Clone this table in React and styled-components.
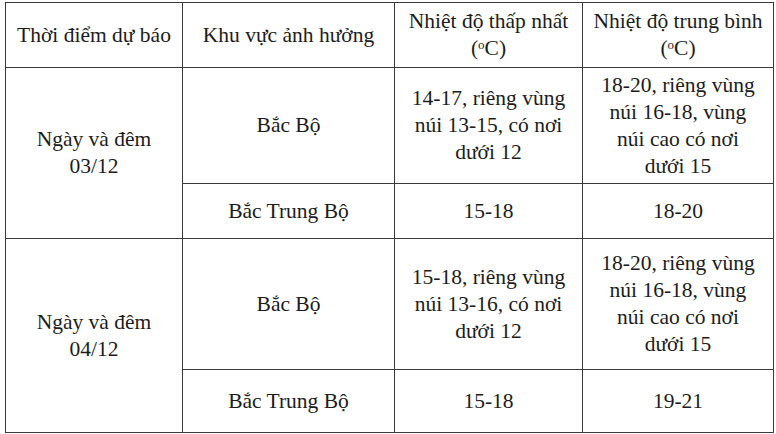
import React from 'react';
import styled, { createGlobalStyle } from 'styled-components';

const GlobalStyle = createGlobalStyle`
    html, body {
        margin: 0;
        padding: 0;
        background: #ffffff;
    }
`;

const Page = styled.div`
    width: 776px;
    height: 434px;
    padding: 2px 0 0 5px;
    box-sizing: border-box;
    overflow: hidden;
    background: #ffffff;
`;

const Table = styled.table`
    border-collapse: collapse;
    table-layout: fixed;
    width: 768px;
    font-family: "Liberation Serif", "Times New Roman", serif;
    font-size: 21.5px;
    line-height: 27px;
    color: #1c1c1c;
`;

const Row = styled.tr`
    height: ${(p) => p.$h}px;
`;

const Cell = styled.td`
    border: 1.5px solid #3a3a3a;
    text-align: center;
    vertical-align: middle;
    padding: 0 8px;
    font-family: "Liberation Serif", "Times New Roman", serif;
    font-size: 21.5px;
    line-height: 27px;
    font-weight: normal;
    color: #1c1c1c;
`;

const Sup = styled.sup`
    font-size: 13px;
    line-height: 0;
    vertical-align: 6px;
`;

const Degree = () => (
    <>
        (<Sup>o</Sup>C)
    </>
);

const days = [
    {
        label: 'Ngày và đêm',
        date: '03/12',
        bacBoH: 116,
        trungH: 55,
        bacBoMin: ['14-17, riêng vùng', 'núi 13-15, có nơi', 'dưới 12'],
        bacBoAvg: ['18-20, riêng vùng', 'núi 16-18, vùng', 'núi cao có nơi', 'dưới 15'],
        trungMin: '15-18',
        trungAvg: '18-20',
    },
    {
        label: 'Ngày và đêm',
        date: '04/12',
        bacBoH: 131,
        trungH: 63,
        bacBoMin: ['15-18, riêng vùng', 'núi 13-16, có nơi', 'dưới 12'],
        bacBoAvg: ['18-20, riêng vùng', 'núi 16-18, vùng', 'núi cao có nơi', 'dưới 15'],
        trungMin: '15-18',
        trungAvg: '19-21',
    },
];

const Lines = ({ items }) =>
    items.map((line, i) => (
        <React.Fragment key={i}>
            {line}
            {i < items.length - 1 && <br />}
        </React.Fragment>
    ));

const App = () => {
    return (
        <Page>
            <GlobalStyle />
            <Table>
                <colgroup>
                    <col style={{ width: 177 }} />
                    <col style={{ width: 212 }} />
                    <col style={{ width: 188 }} />
                    <col style={{ width: 191 }} />
                </colgroup>
                <tbody>
                    <Row $h={65}>
                        <Cell as="th">Thời điểm dự báo</Cell>
                        <Cell as="th">Khu vực ảnh hưởng</Cell>
                        <Cell as="th">
                            Nhiệt độ thấp nhất
                            <br />
                            <Degree />
                        </Cell>
                        <Cell as="th">
                            Nhiệt độ trung bình
                            <br />
                            <Degree />
                        </Cell>
                    </Row>
                    {days.map((day) => (
                        <React.Fragment key={day.date}>
                            <Row $h={day.bacBoH}>
                                <Cell rowSpan={2}>
                                    {day.label}
                                    <br />
                                    {day.date}
                                </Cell>
                                <Cell>Bắc Bộ</Cell>
                                <Cell>
                                    <Lines items={day.bacBoMin} />
                                </Cell>
                                <Cell>
                                    <Lines items={day.bacBoAvg} />
                                </Cell>
                            </Row>
                            <Row $h={day.trungH}>
                                <Cell>Bắc Trung Bộ</Cell>
                                <Cell>{day.trungMin}</Cell>
                                <Cell>{day.trungAvg}</Cell>
                            </Row>
                        </React.Fragment>
                    ))}
                </tbody>
            </Table>
        </Page>
    );
};

export default App;
